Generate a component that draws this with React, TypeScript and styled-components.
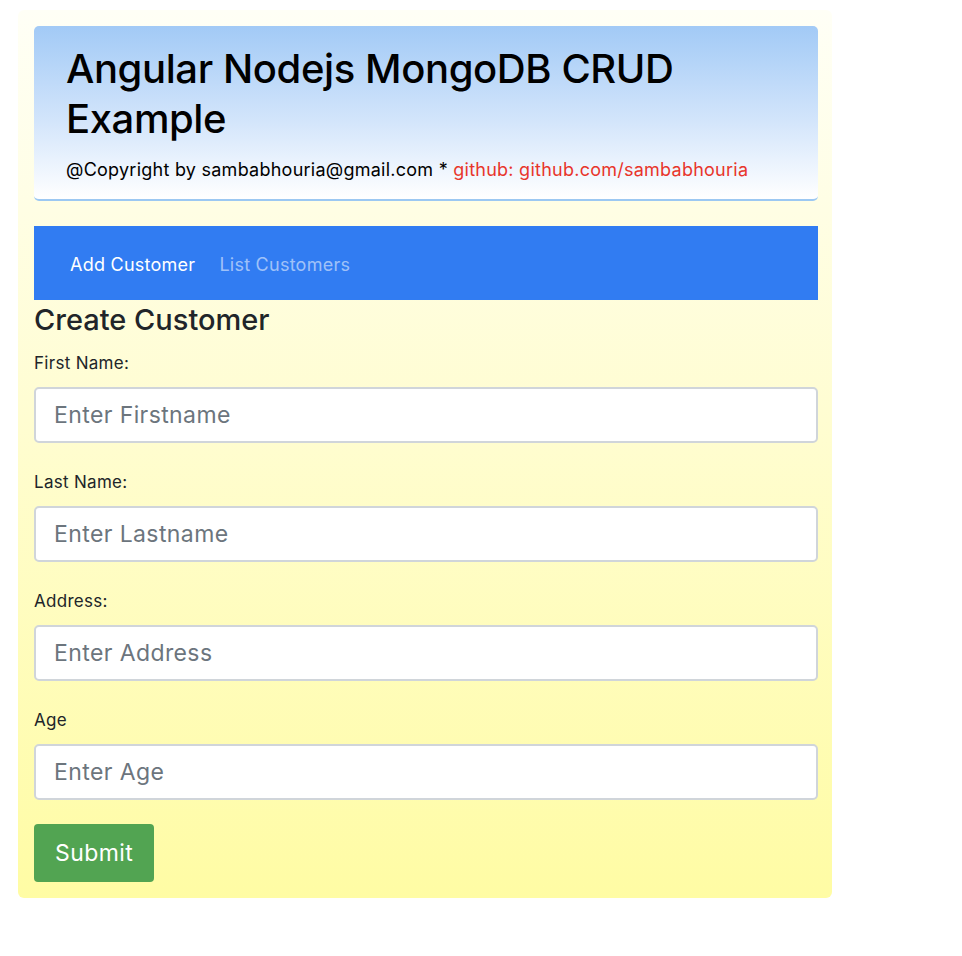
import React from "react";
import styled, { createGlobalStyle } from "styled-components";

const GlobalStyle = createGlobalStyle`
  html, body { margin: 0; padding: 0; background: #ffffff; }
  body {
    font-family: Inter, "Open Sans", "Liberation Sans", sans-serif;
    color: #212529;
  }
  * { box-sizing: border-box; }
`;

const Container = styled.div`
  margin: 10px 0 0 18px;
  width: 814px;
  padding: 16px 14px 16px 16px;
  border-radius: 6px;
  background: linear-gradient(to bottom, #fffff6 0%, #fffdd2 45%, #fffca4 100%);
`;

const Jumbotron = styled.header`
  padding: 18px 32px 16px;
  margin-bottom: 25px;
  border-radius: 5px;
  border-bottom: 2px solid #9cc8f2;
  background: linear-gradient(to bottom, #a2caf6 0%, #d3e5fb 55%, #ffffff 100%);
`;

const Title = styled.h1`
  margin: 0;
  font-size: 40px;
  line-height: 50px;
  font-weight: 500;
  letter-spacing: -0.4px;
  color: #000;
`;

const Copyright = styled.p`
  margin: 12px 0 0;
  font-size: 18px;
  line-height: 27px;
  letter-spacing: 0.25px;
  color: #000;
`;

const RedText = styled.span`
  color: #e8352b;
`;

const NavBar = styled.nav`
  display: flex;
  align-items: center;
  gap: 24px;
  height: 74px;
  padding: 2px 36px 0;
  background: #317cf2;
`;

const NavLink = styled.a<{ $active?: boolean }>`
  font-size: 18px;
  letter-spacing: 0.25px;
  color: ${(p) => (p.$active ? "#ffffff" : "rgba(255,255,255,0.55)")};
  text-decoration: none;
  cursor: pointer;
`;

const Heading = styled.h3`
  margin: 0 0 11px;
  font-size: 29px;
  line-height: 40px;
  font-weight: 500;
  color: #212529;
`;

const FormGroup = styled.div`
  display: flex;
  flex-direction: column;
  margin-bottom: 27px;
  &:last-of-type { margin-bottom: 24px; }
`;

const Label = styled.label`
  font-size: 17px;
  line-height: 24px;
  letter-spacing: 0.3px;
  margin-bottom: 12px;
  color: #212529;
`;

const Input = styled.input`
  height: 56px;
  width: 100%;
  padding: 0 18px;
  border: 2px solid #d0d5da;
  border-radius: 5px;
  background: #fff;
  font-family: inherit;
  font-size: 23px;
  letter-spacing: 0.4px;
  color: #495057;
  outline: none;
  &::placeholder { color: #6c757d; }
`;

const SubmitButton = styled.button`
  display: block;
  height: 58px;
  padding: 0 21px;
  border: none;
  border-radius: 4px;
  background: #52a452;
  color: #fff;
  font-family: inherit;
  font-size: 23px;
  letter-spacing: 0.4px;
  cursor: pointer;
`;

const fields = [
  { label: "First Name:", placeholder: "Enter Firstname" },
  { label: "Last Name:", placeholder: "Enter Lastname" },
  { label: "Address:", placeholder: "Enter Address" },
  { label: "Age", placeholder: "Enter Age" },
];

export default function App() {
  return (
    <>
      <GlobalStyle />
      <Container>
        <Jumbotron>
          <Title>Angular Nodejs MongoDB CRUD Example</Title>
          <Copyright>
            @Copyright by sambabhouria@gmail.com *{" "}
            <RedText>github: github.com/sambabhouria</RedText>
          </Copyright>
        </Jumbotron>
        <NavBar>
          <NavLink $active>Add Customer</NavLink>
          <NavLink>List Customers</NavLink>
        </NavBar>
        <Heading>Create Customer</Heading>
        <form onSubmit={(e) => e.preventDefault()}>
          {fields.map((f) => (
            <FormGroup key={f.label}>
              <Label>{f.label}</Label>
              <Input type="text" placeholder={f.placeholder} />
            </FormGroup>
          ))}
          <SubmitButton type="submit">Submit</SubmitButton>
        </form>
      </Container>
    </>
  );
}
